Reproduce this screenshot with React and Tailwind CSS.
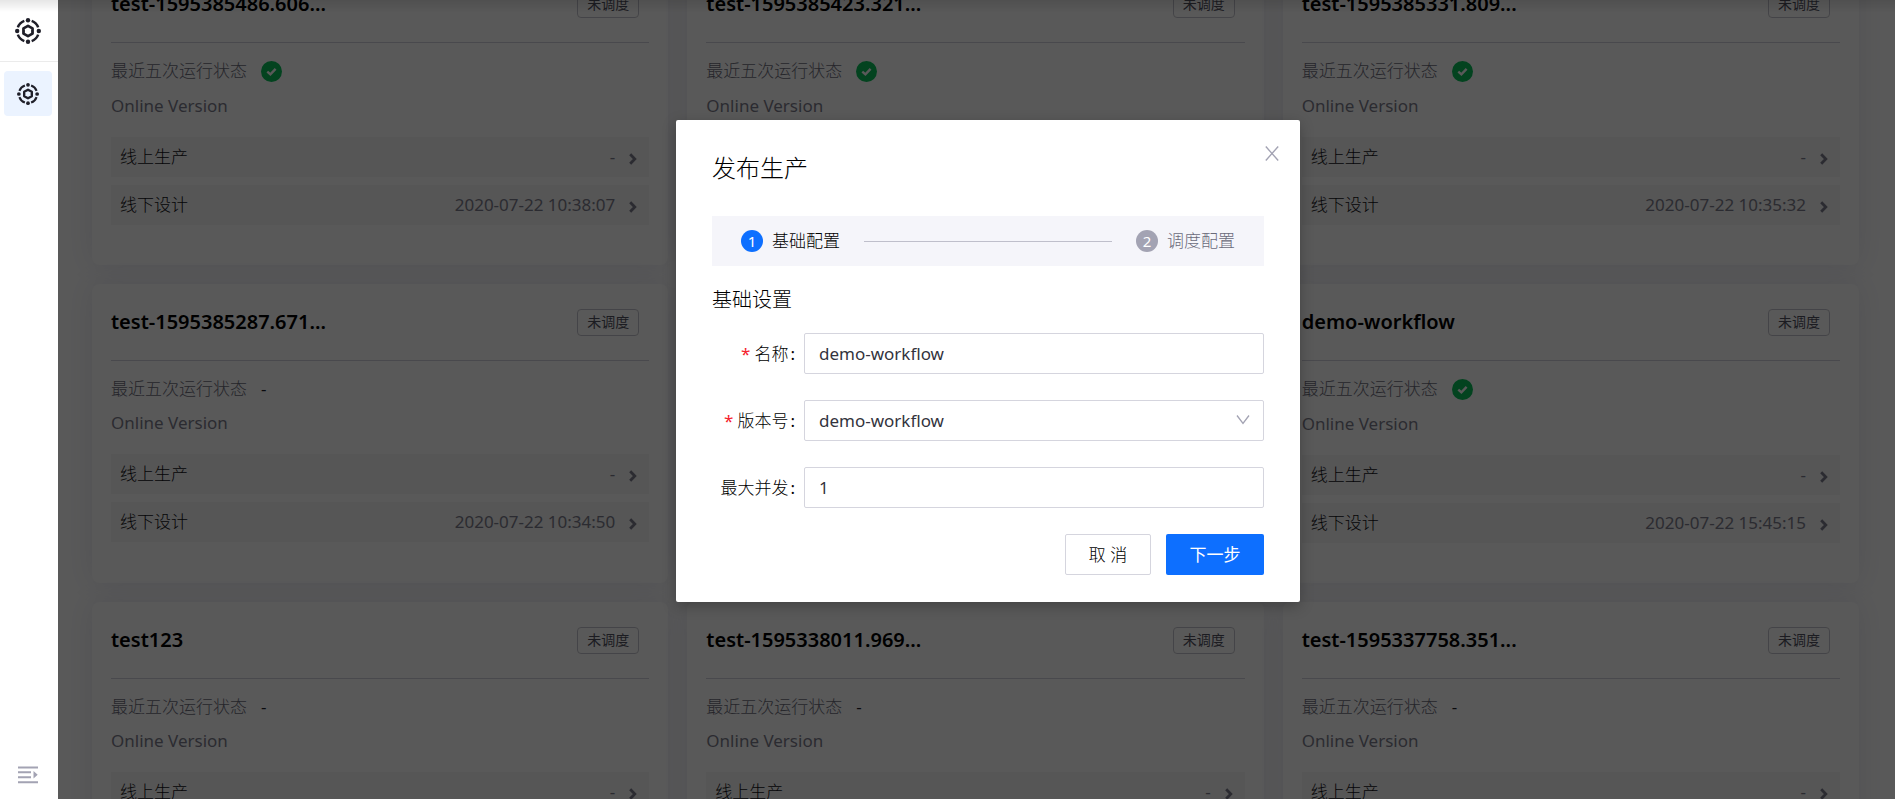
import React, { useState } from "react";
import clsx from "clsx";

const workflows = [
  { name: "test-1595385486.606...", ok: true, design: "2020-07-22 10:38:07" },
  { name: "test-1595385423.321...", ok: true, design: "2020-07-22 10:37:04" },
  { name: "test-1595385331.809...", ok: true, design: "2020-07-22 10:35:32" },
  { name: "test-1595385287.671...", ok: false, design: "2020-07-22 10:34:50" },
  { name: "test-1595385242.118...", ok: false, design: "2020-07-22 10:34:05" },
  { name: "demo-workflow", ok: true, design: "2020-07-22 15:45:15" },
  { name: "test123", ok: false, design: "2020-07-22 10:30:12" },
  { name: "test-1595338011.969...", ok: false, design: "2020-07-21 21:26:52" },
  { name: "test-1595337758.351...", ok: false, design: "2020-07-21 21:22:39" },
];

const WorkflowIcon = ({ className }) => (
  <svg viewBox="0 0 26 26" className={className} fill="none" stroke="currentColor">
    <circle
      cx="13"
      cy="13"
      r="10.8"
      strokeWidth="2.5"
      pathLength="360"
      strokeDasharray="50 40"
      strokeDashoffset="-20"
    />
    <g fill="currentColor" stroke="none">
      <circle cx="13" cy="2.2" r="2.2" />
      <circle cx="13" cy="23.8" r="2.2" />
      <circle cx="2.2" cy="13" r="2.2" />
      <circle cx="23.8" cy="13" r="2.2" />
    </g>
    <path d="M13 7.9 L17.5 10.4 V15.6 L13 18.1 L8.5 15.6 V10.4 Z" strokeWidth="2.8" strokeLinejoin="round" />
  </svg>
);

const Chevron = () => (
  <svg viewBox="0 0 8 12" className="mt-1 h-3 w-2 text-[#7d7d8c]" fill="none" stroke="currentColor">
    <path d="M1.2 1.2 L5.8 6 L1.2 10.8" strokeWidth="2.8" />
  </svg>
);

const Sidebar = () => (
  <aside className="relative flex w-[58px] shrink-0 flex-col bg-white text-[#1f1f29]">
    <div className="flex h-[62px] items-center justify-center border-b border-[#ebebeb] pr-0.5">
      <WorkflowIcon className="h-[26px] w-[26px]" />
    </div>
    <nav className="flex-1 px-1 pt-[9px]">
      <a
        href="#workflow"
        aria-label="workflow"
        className="mr-0.5 flex h-[45px] items-center justify-center rounded-sm bg-[#ebf3ff]"
      >
        <WorkflowIcon className="h-[22px] w-[22px]" />
      </a>
    </nav>
    <button type="button" aria-label="menu" className="mb-[15px] ml-[18px] text-[#a3a3b3]">
      <svg viewBox="0 0 20 18" className="h-[18px] w-5" fill="currentColor">
        <path d="M0 0.5h20v2H0zM0 5.3h13v2H0zM0 10.3h13v2H0zM0 15.3h20v2H0zM15.5 5l4.2 3.8-4.2 3.8z" />
      </svg>
    </button>
  </aside>
);

const VersionRow = ({ label, value }) => (
  <a href="#detail" className="flex h-10 items-center justify-between bg-[#f5f5f5] pr-3 pl-[9px]">
    <span className="font-light text-[#0f0f14]">{label}</span>
    <span className="flex items-center gap-[14px] text-[#7d7d8c]">
      {value}
      <Chevron />
    </span>
  </a>
);

const WorkflowCard = ({ item }) => (
  <section className="min-h-[299px] rounded-lg bg-white px-[19px] shadow-[0_0_28px_rgba(60,60,130,0.12)]">
    <header className="flex h-[77px] items-center justify-between border-b border-[#d2d2dc] pr-[10px]">
      <h3 className="text-[20px] font-semibold text-black">{item.name}</h3>
      <span className="flex h-[27px] w-[62px] items-center justify-center rounded border border-[#c4c4ce] text-[14px] text-[#50505e]">
        未调度
      </span>
    </header>
    <div className={clsx("mt-[15px] flex items-center gap-[14px]", item.ok ? "h-[26px]" : "h-[25px]")}>
      <span className="font-light text-[#6b6b7a]">最近五次运行状态</span>
      {item.ok ? (
        <svg viewBox="0 0 21 21" className="h-[21px] w-[21px]">
          <circle cx="10.5" cy="10.5" r="10.5" fill="#0abf5b" />
          <path d="M6.3 10.6 L9.4 13.4 L14.6 7.9" fill="none" stroke="#fff" strokeWidth="2.4" />
        </svg>
      ) : (
        <span className="text-[#1f1f29]">-</span>
      )}
    </div>
    <p className="mt-[10px] text-[#7d7d8c]">Online Version</p>
    <div className="mt-[19px] flex flex-col gap-2">
      <VersionRow label="线上生产" value="-" />
      <VersionRow label="线下设计" value={item.design} />
    </div>
  </section>
);

const Field = ({ label, id, required, children }) => (
  <div className="flex h-[41px] items-center">
    <label htmlFor={id} className="w-[92px] shrink-0 pr-[9px] text-right font-light text-black">
      {required && <span className="mr-1 font-normal text-[#f5222d]">*</span>}
      {label}
      <span className="ml-0.5 font-normal">:</span>
    </label>
    <div className="relative flex-1">{children}</div>
  </div>
);

const inputClass =
  "block h-[41px] w-full appearance-none rounded-xs border border-[#d5d5de] bg-white px-[14px] text-[#33333d] outline-none";

const PublishModal = () => {
  const [form, setForm] = useState({
    name: "demo-workflow",
    version: "demo-workflow",
    parallel: "1",
  });

  const handleChange = (e) => setForm({ ...form, [e.target.name]: e.target.value });

  return (
    <div
      role="dialog"
      aria-labelledby="modal-title"
      className="relative w-full max-w-[624px] rounded-xs bg-white px-9 pt-[30px] pb-[27px] shadow-[0_4px_14px_rgba(0,0,0,0.25)]"
    >
      <button type="button" aria-label="close" className="absolute top-[26px] right-[21px] text-[#a3a3b3]">
        <svg viewBox="0 0 14 15" className="h-[15px] w-[14px]" fill="none" stroke="currentColor">
          <path d="M0.8 0.5 L13.2 14.5 M13.2 0.5 L0.8 14.5" strokeWidth="1.4" />
        </svg>
      </button>
      <h2 id="modal-title" className="text-[24px] leading-9 font-light text-black">
        发布生产
      </h2>

      <ol className="mt-[30px] flex h-[50px] items-center gap-6 bg-[#f5f5fa] px-[29px]">
        <li className="flex items-center gap-[9px] font-light text-black">
          <span className="flex h-[22px] w-[22px] items-center justify-center rounded-full bg-[#0d6fff] text-[15px] font-normal text-white">
            1
          </span>
          基础配置
        </li>
        <li aria-hidden="true" className="h-px flex-1 bg-[#bfbfcb]" />
        <li className="flex items-center gap-[9px] font-light text-[#6b6b7a]">
          <span className="flex h-[22px] w-[22px] items-center justify-center rounded-full bg-[#a3a3b3] text-[15px] font-normal text-white">
            2
          </span>
          调度配置
        </li>
      </ol>

      <h4 className="mt-5 text-[20px] leading-7 font-light text-black">基础设置</h4>

      <form onSubmit={(e) => e.preventDefault()}>
        <div className="mt-[19px] flex flex-col gap-[26px]">
          <Field label="名称" id="name" required>
            <input id="name" name="name" value={form.name} onChange={handleChange} className={inputClass} />
          </Field>
          <Field label="版本号" id="version" required>
            <select id="version" name="version" value={form.version} onChange={handleChange} className={inputClass}>
              <option value="demo-workflow">demo-workflow</option>
            </select>
            <svg
              viewBox="0 0 14 10"
              className="pointer-events-none absolute top-[15px] right-[14px] h-[10px] w-[14px] text-[#a3a3b3]"
              fill="none"
              stroke="currentColor"
            >
              <path d="M1 0.5 L7 8.5 L13 0.5" strokeWidth="1.3" />
            </svg>
          </Field>
          <Field label="最大并发" id="parallel">
            <input id="parallel" name="parallel" value={form.parallel} onChange={handleChange} className={inputClass} />
          </Field>
        </div>
        <div className="mt-[26px] flex justify-end gap-[15px]">
          <button
            type="button"
            className="h-[41px] w-[86px] rounded-xs border border-[#d5d5de] font-light text-black"
          >
            取 消
          </button>
          <button type="submit" className="h-[41px] w-[98px] rounded-xs bg-[#0d6fff] text-white">
            下一步
          </button>
        </div>
      </form>
    </div>
  );
};

const App = () => {
  return (
    <div className="flex h-screen overflow-hidden bg-white font-['Noto_Sans','Noto_Sans_CJK_SC',sans-serif] text-[17px] leading-6">
      <Sidebar />
      <main className="relative flex-1 overflow-hidden">
        <div className="-mt-[34px] grid grid-cols-3 gap-[19px] pr-9 pl-[34px]">
          {workflows.map((item) => (
            <WorkflowCard key={item.name} item={item} />
          ))}
        </div>
        <div className="absolute inset-0 flex items-start justify-center bg-black/65 pt-[120px] pl-[23px]">
          <PublishModal />
        </div>
      </main>
      <div className="pointer-events-none fixed inset-x-0 top-0 h-3 bg-linear-to-b from-black/10 to-transparent" />
    </div>
  );
};

export default App;
